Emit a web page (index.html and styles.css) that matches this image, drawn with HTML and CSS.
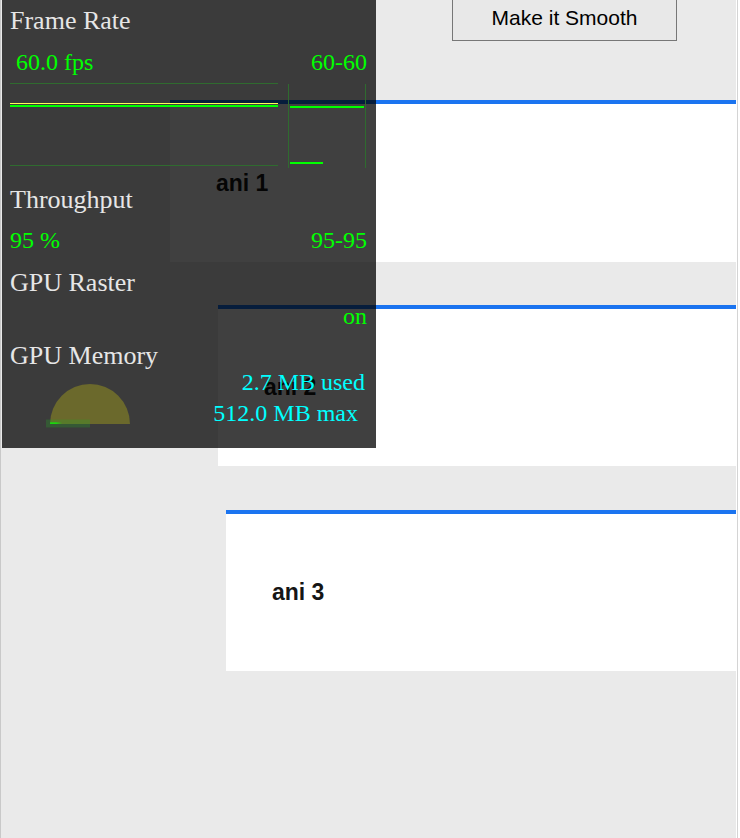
FILE: index.html
```html
<!DOCTYPE html>
<html lang="en">
<head>
<meta charset="utf-8">
<title>Make it Smooth</title>
<link rel="stylesheet" href="styles.css">
</head>
<body>
<div class="page">
  <div class="stage">
    <div class="toolbar">
      <button class="smooth" type="button">Make it Smooth</button>
    </div>
    <div class="lane lane-1"><span class="lane-label">ani 1</span></div>
    <div class="lane lane-2"><span class="lane-label">ani 2</span></div>
    <div class="lane lane-3"><span class="lane-label">ani 3</span></div>

    <div class="hud">
      <div class="hud-label hud-first">Frame Rate</div>
      <div class="hud-row hud-fps"><span class="fps-value">60.0 fps</span><span>60-60</span></div>
      <svg class="hud-graph" width="360" height="88" viewBox="0 0 360 88">
        <line x1="0" y1="1.5" x2="268" y2="1.5" stroke="#2f6b2f" stroke-width="1"/>
        <line x1="0" y1="83.5" x2="268" y2="83.5" stroke="#2f6b2f" stroke-width="1"/>
        <line x1="0" y1="21.5" x2="268" y2="21.5" stroke="#ffff55" stroke-width="1"/>
        <rect x="0" y="23" width="268" height="2" fill="#00ff00"/>
        <line x1="278.5" y1="2" x2="278.5" y2="86" stroke="#2f6b2f" stroke-width="1"/>
        <line x1="355.5" y1="2" x2="355.5" y2="86" stroke="#2f6b2f" stroke-width="1"/>
        <rect x="280" y="24" width="74" height="2" fill="#00ff00"/>
        <rect x="280" y="80" width="33" height="2" fill="#00ff00"/>
      </svg>
      <div class="hud-label hud-throughput">Throughput</div>
      <div class="hud-row hud-tp"><span>95 %</span><span>95-95</span></div>
      <div class="hud-label hud-raster">GPU Raster</div>
      <div class="hud-row hud-on"><span></span><span>on</span></div>
      <div class="hud-mem">
        <div class="mem-left">
          <div class="hud-label">GPU Memory</div>
          <svg class="mem-gauge" width="84" height="44" viewBox="0 0 84 44">
            <defs>
              <linearGradient id="usedLine" x1="0" y1="0" x2="1" y2="0">
                <stop offset="0" stop-color="#00ff00"/>
                <stop offset="0.5" stop-color="#00ff00"/>
                <stop offset="1" stop-color="#00ff00" stop-opacity="0"/>
              </linearGradient>
            </defs>
            <path d="M4 40 A40 40 0 0 1 84 40 Z" fill="#6b692c"/>
            <rect x="0" y="35.5" width="44" height="8" fill="rgba(40,170,40,0.28)"/>
            <rect x="4" y="38.5" width="12" height="1.2" fill="url(#usedLine)"/>
          </svg>
        </div>
        <div class="mem-right">
          <div class="mem-used">2.7 MB used</div>
          <div class="mem-max">512.0 MB max</div>
        </div>
      </div>
    </div>
  </div>
</div>
</body>
</html>
```
FILE: styles.css
```css
html, body {
  margin: 0;
  padding: 0;
  background: #ffffff;
}

.page {
  width: 735px;
  height: 838px;
  border-left: 1px solid #c9c9c9;
  border-right: 1px solid #d4d4d4;
  padding-right: 1px;
  background: #ffffff;
}

.stage {
  position: relative;
  height: 838px;
  background: #eaeaea;
  overflow: hidden;
}

.toolbar {
  display: flex;
  padding-left: 451px;
  margin-top: -5px;
}

.smooth {
  width: 225px;
  height: 46px;
  margin: 0;
  padding: 0;
  font-family: "Liberation Sans", Arial, sans-serif;
  font-size: 21px;
  color: #000;
  background: #e8e8e8;
  border: 1px solid #777777;
  border-radius: 0;
}

.lane {
  display: flex;
  align-items: center;
  height: 157px;
  margin-top: 44px;
  padding-left: 46px;
  border-top: 4px solid #1b74f0;
  background: #ffffff;
  font-family: "Liberation Sans", Arial, sans-serif;
  font-size: 23px;
  font-weight: bold;
  color: #151515;
}

.lane-1 {
  margin-top: 59px;
  margin-left: 169px;
  height: 158px;
}

.lane-2 {
  margin-top: 43px;
  margin-left: 217px;
}

.lane-3 {
  margin-left: 225px;
}

/* heads-up display overlay */
.hud {
  position: absolute;
  left: 1px;
  top: 0;
  width: 374px;
  height: 448px;
  box-sizing: border-box;
  padding: 0 9px 0 8px;
  background: rgba(0, 0, 0, 0.75);
  font-family: "Liberation Serif", "Times New Roman", serif;
}

.hud-label {
  font-size: 26px;
  line-height: 30px;
  color: #e6e6e6;
  white-space: nowrap;
}

.hud-row {
  display: flex;
  justify-content: space-between;
  font-size: 24px;
  line-height: 30px;
  color: #00ff00;
  white-space: nowrap;
}

.hud-first {
  margin-top: 5.5px;
}

.hud-fps {
  margin-top: 11.5px;
}

.fps-value {
  padding-left: 6px;
}

.hud-graph {
  display: block;
  margin-top: 5px;
}

.hud-throughput {
  margin-top: 14.5px;
}

.hud-tp {
  margin-top: 10.4px;
}

.hud-raster {
  margin-top: 13px;
}

.hud-on {
  margin-top: 3px;
}

.hud-mem {
  display: flex;
  justify-content: space-between;
  margin-top: 10.3px;
}

.mem-gauge {
  display: block;
  margin-top: 12.8px;
  margin-left: 36px;
}

.mem-right {
  display: flex;
  flex-direction: column;
  align-items: flex-end;
  padding-top: 25.7px;
  font-size: 24px;
  line-height: 30px;
  color: #00ffff;
  white-space: nowrap;
}

.mem-used {
  padding-right: 2px;
}

.mem-max {
  margin-top: 0.7px;
  padding-right: 9px;
}
```
